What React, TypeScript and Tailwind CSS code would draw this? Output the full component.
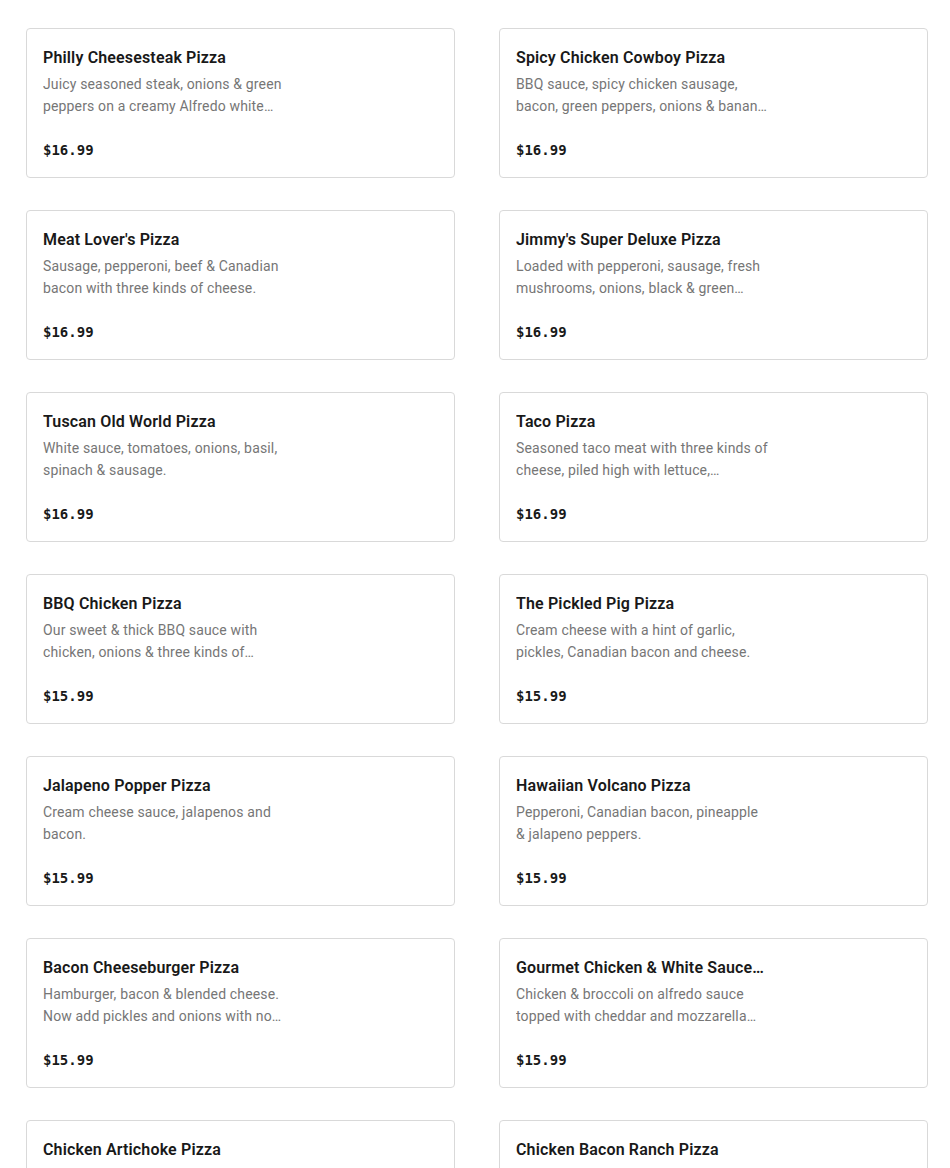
const items = [
  { name: "Philly Cheesesteak Pizza", desc: "Juicy seasoned steak, onions & green peppers on a creamy Alfredo white sauce with mozzarella.", price: "$16.99" },
  { name: "Spicy Chicken Cowboy Pizza", desc: "BBQ sauce, spicy chicken sausage, bacon, green peppers, onions & banana peppers.", price: "$16.99" },
  { name: "Meat Lover's Pizza", desc: "Sausage, pepperoni, beef & Canadian bacon with three kinds of cheese.", price: "$16.99" },
  { name: "Jimmy's Super Deluxe Pizza", desc: "Loaded with pepperoni, sausage, fresh mushrooms, onions, black & green olives and green peppers.", price: "$16.99" },
  { name: "Tuscan Old World Pizza", desc: "White sauce, tomatoes, onions, basil, spinach & sausage.", price: "$16.99" },
  { name: "Taco Pizza", desc: "Seasoned taco meat with three kinds of cheese, piled high with lettuce, tomatoes and onions.", price: "$16.99" },
  { name: "BBQ Chicken Pizza", desc: "Our sweet & thick BBQ sauce with chicken, onions & three kinds of cheese.", price: "$15.99" },
  { name: "The Pickled Pig Pizza", desc: "Cream cheese with a hint of garlic, pickles, Canadian bacon and cheese.", price: "$15.99" },
  { name: "Jalapeno Popper Pizza", desc: "Cream cheese sauce, jalapenos and bacon.", price: "$15.99" },
  { name: "Hawaiian Volcano Pizza", desc: "Pepperoni, Canadian bacon, pineapple & jalapeno peppers.", price: "$15.99" },
  { name: "Bacon Cheeseburger Pizza", desc: "Hamburger, bacon & blended cheese. Now add pickles and onions with no extra charge.", price: "$15.99" },
  { name: "Gourmet Chicken & White Sauce Pizza", desc: "Chicken & broccoli on alfredo sauce topped with cheddar and mozzarella cheese.", price: "$15.99" },
  { name: "Chicken Artichoke Pizza", desc: "Chicken, artichoke hearts, spinach and tomatoes on a creamy white sauce.", price: "$15.99" },
  { name: "Chicken Bacon Ranch Pizza", desc: "Ranch sauce, chicken, bacon, tomatoes and mozzarella cheese.", price: "$15.99" },
];

const MenuCard = ({ name, desc, price }: { name: string; desc: string; price: string }) => (
  <div className="h-[150px] rounded-[4px] border border-[#d9d9d9] bg-white px-4 pt-4">
    <div className="w-[253px] tracking-[0.15px]">
      <h3 className="max-w-[248px] truncate pt-px text-base leading-6 font-semibold text-[#191919]">{name}</h3>
      <p className="mt-[3px] line-clamp-2 text-sm leading-[22px] text-[#767676]">{desc}</p>
    </div>
    <div className="mt-[21px] text-sm leading-6 font-bold text-[#191919] font-['DejaVu_Sans_Mono',monospace]">
      {price}
    </div>
  </div>
);

export default function App() {
  return (
    <div className="min-h-screen bg-white font-['Roboto',sans-serif]">
      <div className="grid grid-cols-[429px_429px] gap-x-[44px] gap-y-8 pl-[26px] pt-[28px]">
        {items.map((item) => (
          <MenuCard key={item.name} {...item} />
        ))}
      </div>
    </div>
  );
}
